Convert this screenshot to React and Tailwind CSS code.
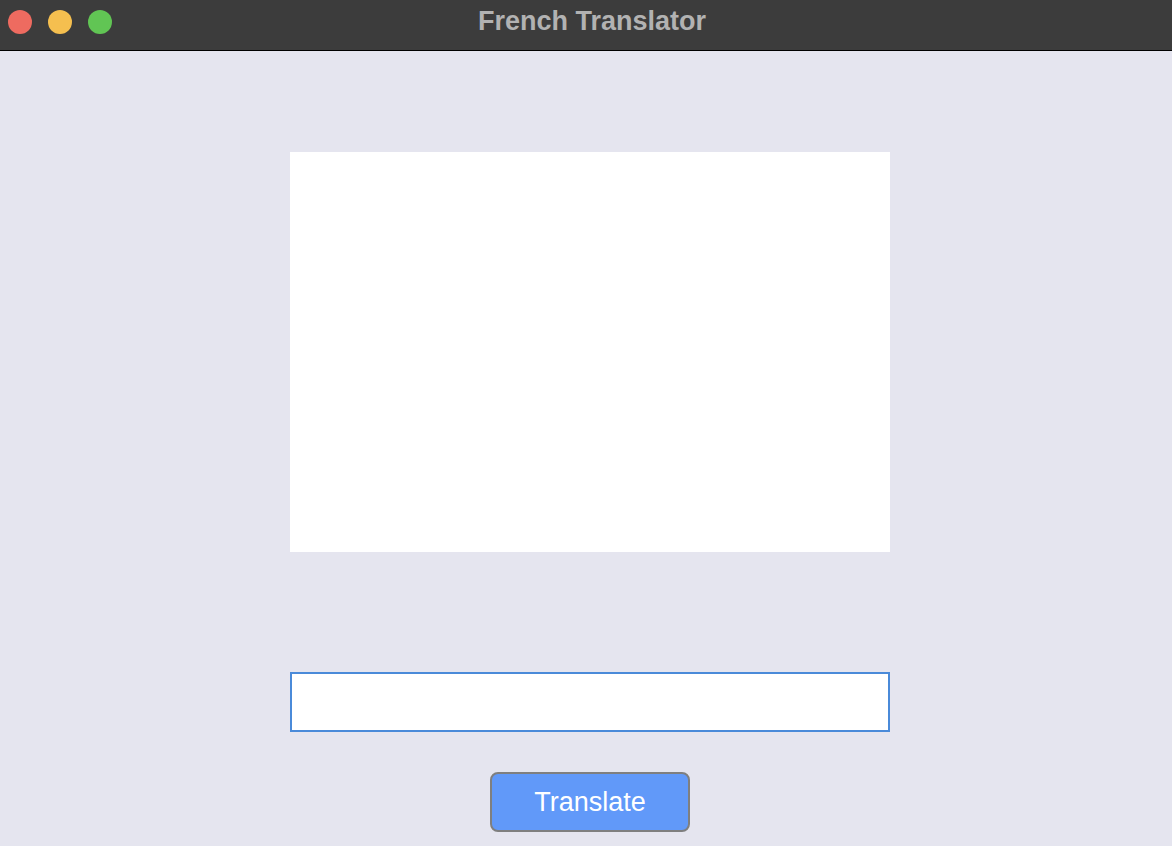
export default function App() {
  return (
    <div className="w-[1172px] h-[846px] flex flex-col bg-[#e5e5ef] overflow-hidden" style={{ fontFamily: '"Liberation Sans", Arial, sans-serif' }}>
      {/* Title bar */}
      <div className="relative h-[51px] shrink-0 bg-[#3c3c3c] border-b border-black flex items-center justify-center">
        <div className="absolute left-[8px] top-[10px] flex gap-[16px]">
          <span className="w-6 h-6 rounded-full bg-[#ee6b60]" />
          <span className="w-6 h-6 rounded-full bg-[#f5bf4f]" />
          <span className="w-6 h-6 rounded-full bg-[#61c554]" />
        </div>
        <h1 className="text-[27px] leading-[30px] font-bold text-[#b2b2b2] -mt-[9px] ml-[12px]">French Translator</h1>
      </div>

      {/* Content */}
      <div className="flex flex-col items-center pt-[101px] pl-[8px]">
        <div className="w-[600px] h-[400px] bg-white" />
        <input className="mt-[120px] w-[600px] h-[60px] bg-white border-2 border-[#4a8ad9] outline-none px-2" />
        <button className="mt-[40px] w-[200px] h-[60px] rounded-[8px] border-2 border-[#7f7f7f] bg-[#6199f9] text-white text-[27px]">
          Translate
        </button>
      </div>
    </div>
  );
}
